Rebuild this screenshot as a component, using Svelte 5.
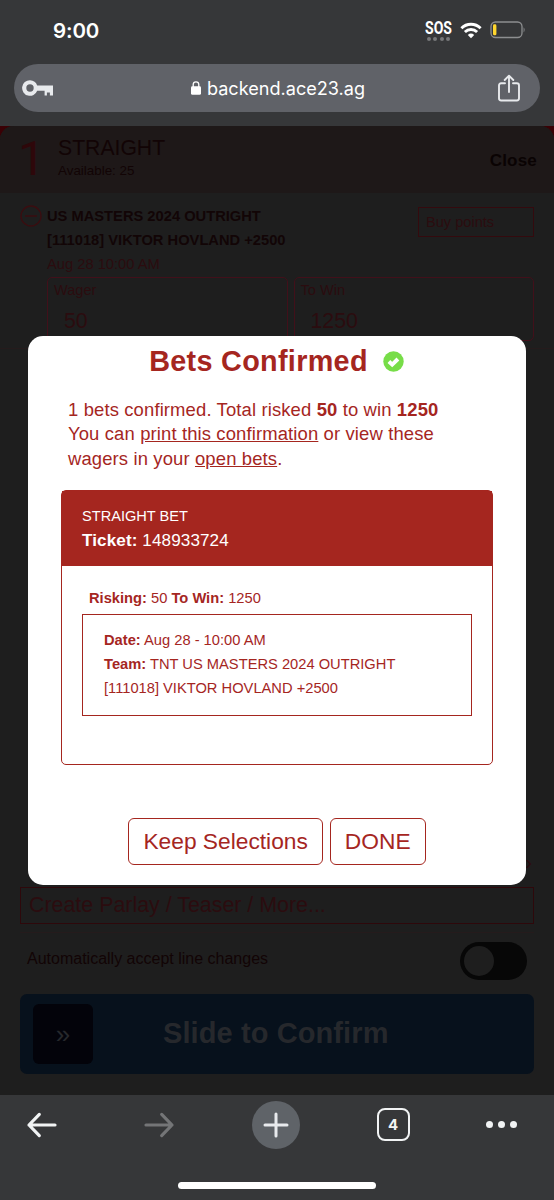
<script>
    const url = "backend.ace23.ag";
    const selection = {
        event: "US MASTERS 2024 OUTRIGHT",
        name: "[111018] VIKTOR HOVLAND +2500",
    };
    const risk = 50;
    const win = 1250;
    const ticket = "148933724";
    let autoAccept = $state(false);
</script>

<div class="phone">
    <header class="browser-top">
        <div class="status">
            <span class="time">9:00</span>
            <div class="signals">
                <div class="sos">
                    <span>SOS</span>
                    <div class="dots"><i></i><i></i><i></i><i></i></div>
                </div>
                <svg class="wifi" width="22" height="17" viewBox="0 0 22 17">
                    <g fill="none" stroke="#fff" stroke-width="2.9">
                        <path d="M1.4 6.2a13.7 13.7 0 0 1 19.2 0" />
                        <path d="M4.9 10a8.8 8.8 0 0 1 12.2 0" />
                    </g>
                    <path d="M7.8 12.9a4.7 4.7 0 0 1 6.4 0L11 16.2z" fill="#fff" />
                </svg>
                <svg width="36" height="18" viewBox="0 0 36 18">
                    <rect x="1" y="1" width="31" height="15.5" rx="4.5" fill="none" stroke="#8d8e90" stroke-width="1.3" />
                    <rect x="3" y="3.3" width="3.4" height="11" rx="1.4" fill="#ffd62e" />
                    <path d="M33.6 6.2q2 2.6 0 5.2z" fill="#8d8e90" />
                </svg>
            </div>
        </div>
        <div class="address">
            <svg width="32" height="18" viewBox="0 0 32 18">
                <path
                    fill="#e8eaed"
                    fill-rule="evenodd"
                    d="M8 1.2a7.8 7.8 0 1 0 7.2 10.6h7.4v4.6h2.3v-3h3v3h3.1V6.6H15.2A7.8 7.8 0 0 0 8 1.2zm0 4.1a3.7 3.7 0 1 1 0 7.4 3.7 3.7 0 0 1 0-7.4z"
                />
            </svg>
            <div class="url">
                <svg width="10" height="14" viewBox="0 0 10 14">
                    <rect x="0" y="5.3" width="10" height="8.5" rx="1.4" fill="#fff" />
                    <path d="M2.2 6V3.6a2.8 2.8 0 0 1 5.6 0V6" fill="none" stroke="#fff" stroke-width="1.3" />
                </svg>
                <span>{url}</span>
            </div>
            <svg width="22" height="28" viewBox="0 0 22 28" fill="none" stroke="#e8eaed" stroke-width="1.9" stroke-linecap="round" stroke-linejoin="round">
                <path d="M7 9.3H3.2Q1 9.3 1 11.5v12.8q0 2.2 2.2 2.2h15.6q2.2 0 2.2-2.2V11.5q0-2.2-2.2-2.2H15" />
                <path d="M11 18V1.8M6.7 6 11 1.7 15.3 6" />
            </svg>
        </div>
    </header>

    <main>
        <div class="slip">
            <div class="slip-head">
                <span class="count">1</span>
                <div class="kind">
                    <span class="straight">STRAIGHT</span>
                    <span class="available">Available: 25</span>
                </div>
                <button class="close">Close</button>
            </div>

            <div class="bet">
                <svg class="remove" width="22" height="22" viewBox="0 0 22 22" fill="none" stroke="#3a0d10">
                    <circle cx="11" cy="11" r="10" stroke-width="1.4" />
                    <path d="M5 11h12" stroke-width="1.3" />
                </svg>
                <div class="bet-body">
                    <div class="bet-top">
                        <div class="bet-text">
                            <b>{selection.event}</b>
                            <b>{selection.name}</b>
                            <span>Aug 28 10:00 AM</span>
                        </div>
                        <div class="points">Buy points</div>
                    </div>
                    <div class="fields">
                        <div class="field"><span>Wager</span><em>{risk}</em></div>
                        <div class="field"><span>To Win</span><em>{win}</em></div>
                    </div>
                </div>
            </div>
            <div class="rule first"></div>

            <div class="slip-foot">
                <div class="chevron">›</div>
                <div class="parlay">Create Parlay / Teaser / More...</div>
                <div class="rule"></div>
                <div class="accept">
                    <span>Automatically accept line changes</span>
                    <button
                        class="toggle"
                        class:on={autoAccept}
                        role="switch"
                        aria-checked={autoAccept}
                        aria-label="accept line changes"
                        onclick={() => (autoAccept = !autoAccept)}
                    ></button>
                </div>
                <div class="slide">
                    <div class="handle">»</div>
                    <span>Slide to Confirm</span>
                </div>
            </div>
        </div>

        <div class="modal" role="dialog">
            <h1>
                Bets Confirmed
                <svg width="21" height="21" viewBox="0 0 21 21">
                    <circle cx="10.5" cy="10.5" r="10.2" fill="#77dd48" />
                    <path d="M5.9 10.5l3.3 3.1 5.7-5.6" fill="none" stroke="#fff" stroke-width="4" />
                </svg>
            </h1>
            <p class="summary">
                1 bets confirmed. Total risked <b>{risk}</b> to win <b>{win}</b><br />
                You can <u>print this confirmation</u> or view these<br />
                wagers in your <u>open bets</u>.
            </p>
            <div class="ticket">
                <div class="ticket-head">
                    <span class="ticket-type">STRAIGHT BET</span>
                    <span class="ticket-no"><b>Ticket:</b> {ticket}</span>
                </div>
                <div class="ticket-body">
                    <div class="risking"><b>Risking:</b> {risk} <b>To Win:</b> {win}</div>
                    <div class="detail">
                        <b>Date:</b> Aug 28 - 10:00 AM<br />
                        <b>Team:</b> TNT {selection.event}<br />
                        {selection.name}
                    </div>
                </div>
            </div>
            <div class="actions">
                <button>Keep Selections</button>
                <button>DONE</button>
            </div>
        </div>
    </main>

    <footer class="browser-bottom">
        <nav>
            <div class="cell">
                <svg width="32" height="26" viewBox="0 0 32 26" fill="none" stroke="#f1f3f4" stroke-width="3.2" stroke-linecap="round" stroke-linejoin="round">
                    <path d="M29 13H3M13.3 2.4 3 13l10.3 10.6" />
                </svg>
            </div>
            <div class="cell">
                <svg width="32" height="26" viewBox="0 0 32 26" fill="none" stroke="#747577" stroke-width="3.2" stroke-linecap="round" stroke-linejoin="round">
                    <path d="M3 13h26M18.7 2.4 29 13 18.7 23.6" />
                </svg>
            </div>
            <div class="cell plus">
                <svg width="26" height="26" viewBox="0 0 26 26" stroke="#e8eaed" stroke-width="3" stroke-linecap="round">
                    <path d="M13 2v22M2 13h22" />
                </svg>
            </div>
            <div class="cell">
                <div class="tabs">4</div>
            </div>
            <div class="more"><i></i><i></i><i></i></div>
        </nav>
        <div class="home"></div>
    </footer>
</div>

<style>
    :global(body) {
        margin: 0;
        background: #1e1e1e;
    }
    .phone {
        width: 554px;
        height: 1200px;
        display: flex;
        flex-direction: column;
        overflow: hidden;
        background: #1e1e1e;
        font-family: "Liberation Sans", Arial, sans-serif;
    }
    .phone * {
        box-sizing: border-box;
    }
    button {
        font: inherit;
        background: none;
        border: none;
        padding: 0;
    }
    svg {
        display: block;
        flex: none;
    }

    .browser-top {
        height: 126px;
        flex: none;
        background: #363739;
        color: #fff;
        font-family: Inter, sans-serif;
    }
    .status {
        height: 64px;
        padding: 0 28px 4px 53px;
        display: flex;
        align-items: center;
        justify-content: space-between;
    }
    .time {
        font-size: 20.5px;
        font-weight: 600;
        letter-spacing: -0.1px;
    }
    .signals {
        display: flex;
        align-items: center;
        gap: 8px;
    }
    .sos {
        width: 27px;
        font: 700 18px/17px Roboto, sans-serif;
    }
    .sos span {
        display: block;
        transform: scaleX(0.78);
        transform-origin: left;
    }
    .dots {
        display: flex;
        gap: 2.3px;
        padding: 1px 0 0 2px;
    }
    .dots i {
        width: 4px;
        height: 4px;
        border-radius: 50%;
        background: #77787a;
    }
    .address {
        height: 48px;
        margin: 0 14px;
        padding: 0 20px 0 8px;
        border-radius: 24px;
        background: #606268;
        display: flex;
        align-items: center;
        justify-content: space-between;
    }
    .url {
        display: flex;
        align-items: center;
        gap: 6px;
        padding: 0 0 1px 4px;
        font-size: 18.1px;
    }

    main {
        position: relative;
        flex: 1;
        background: #3a0005;
    }
    .slip {
        height: 100%;
        display: flex;
        flex-direction: column;
        border-radius: 14px 14px 0 0;
        overflow: hidden;
        background: #1e1e1e;
        color: #2b0c0f;
        font-size: 14.6px;
    }
    .slip-head {
        height: 67px;
        padding: 0 17px 0 18px;
        display: flex;
        background: #1e1818;
        color: #120405;
    }
    .count {
        width: 40px;
        font: 48px/66px Roboto, sans-serif;
        color: #2e070a;
    }
    .kind {
        flex: 1;
        display: flex;
        flex-direction: column;
        padding-top: 9px;
    }
    .straight {
        font-size: 21.2px;
        line-height: 26px;
    }
    .available {
        font-size: 13.4px;
        line-height: 20px;
    }
    .close {
        padding-top: 2px;
        font-size: 17px;
        font-weight: bold;
        letter-spacing: 0.2px;
        color: #0a0303;
    }
    .bet {
        display: flex;
        padding: 11px 20px 0;
        gap: 5px;
    }
    .remove {
        margin-top: 1px;
    }
    .bet-body {
        flex: 1;
    }
    .bet-top {
        display: flex;
        justify-content: space-between;
    }
    .bet-text {
        display: flex;
        flex-direction: column;
        font-size: 14.7px;
        line-height: 24px;
    }
    .bet-text b {
        color: #120506;
    }
    .points {
        width: 116px;
        height: 30px;
        margin-top: 3px;
        padding-left: 7px;
        border: 1px solid #340a0e;
        line-height: 28px;
    }
    .fields {
        display: flex;
        gap: 6px;
        padding-top: 1px;
    }
    .field {
        flex: 1;
        height: 64px;
        padding: 3px 6px;
        border: 1px solid #42101a;
        border-radius: 5px;
        display: flex;
        flex-direction: column;
    }
    .field span {
        line-height: 18px;
    }
    .field em {
        padding: 10px 10px 0;
        font-size: 21.3px;
        font-style: normal;
        line-height: 25px;
    }
    .rule {
        height: 1px;
        margin: 0 20px;
        background: #251b1c;
    }
    .first {
        margin: 7px 0 0;
    }
    .slip-foot {
        margin-top: auto;
        padding-bottom: 21px;
    }
    .chevron {
        margin-right: 22px;
        text-align: right;
        font-size: 20px;
        line-height: 24px;
        padding-bottom: 13px;
    }
    .parlay {
        height: 37px;
        margin: 0 20px 8px;
        padding-left: 8px;
        border: 1px solid #2e080b;
        font-size: 21.4px;
        line-height: 35px;
    }
    .accept {
        height: 61px;
        padding: 0 27px 5px;
        display: flex;
        align-items: center;
        justify-content: space-between;
        color: #120405;
        font-size: 16px;
    }
    .accept span {
        padding-bottom: 5px;
    }
    .toggle {
        width: 67px;
        height: 38px;
        padding: 4px;
        border-radius: 19px;
        background: #070707;
    }
    .toggle::before {
        content: "";
        display: block;
        width: 30px;
        height: 30px;
        border-radius: 50%;
        background: #1e1e1e;
    }
    .toggle.on::before {
        margin-left: auto;
    }
    .slide {
        height: 80px;
        margin: 0 20px;
        padding: 0 13px;
        border-radius: 7px;
        background: #07111c;
        display: flex;
        align-items: center;
        color: #26282c;
        font-size: 29px;
        font-weight: bold;
    }
    .slide span {
        padding: 0 0 1px 70px;
        letter-spacing: 0.1px;
    }
    .handle {
        width: 60px;
        height: 60px;
        border-radius: 6px;
        background: #03030a;
        text-align: center;
        font-size: 26px;
        font-weight: normal;
        line-height: 60px;
    }

    .modal {
        position: absolute;
        left: 28px;
        top: 210px;
        width: 498px;
        height: 549px;
        padding: 0 33px;
        border-radius: 15px;
        background: #fff;
        color: #a5261f;
    }
    h1 {
        margin: 0;
        padding: 8px 1px 0 0;
        display: flex;
        align-items: center;
        justify-content: center;
        gap: 15px;
        font-size: 28.8px;
        line-height: 34px;
        letter-spacing: 0.3px;
    }
    .summary {
        margin: 20px 0 0;
        padding-left: 7px;
        font-size: 18.45px;
        line-height: 24.3px;
        letter-spacing: 0.13px;
        white-space: nowrap;
    }
    .ticket {
        height: 275px;
        margin-top: 19px;
        border: 1px solid #a5261f;
        border-radius: 5px;
    }
    .ticket-head {
        height: 75px;
        padding: 13px 20px 0;
        display: flex;
        flex-direction: column;
        background: #a5261f;
        color: #fff;
        line-height: 24px;
    }
    .ticket-type {
        font-size: 14.6px;
    }
    .ticket-no {
        padding-top: 1px;
        font-size: 17.1px;
        letter-spacing: 0.1px;
    }
    .ticket-body {
        padding: 20px 20px 0;
        font-size: 14.7px;
        line-height: 24px;
    }
    .risking {
        padding: 0 7px 4px;
    }
    .detail {
        height: 102px;
        padding: 13px 21px 0 21px;
        border: 1px solid #a5261f;
        white-space: nowrap;
    }
    .actions {
        display: flex;
        justify-content: center;
        gap: 7px;
        padding-top: 53px;
    }
    .actions button {
        height: 47px;
        padding: 0 14px;
        border: 1px solid #a5261f;
        border-radius: 6px;
        color: inherit;
        font-size: 22.75px;
    }

    .browser-bottom {
        height: 105px;
        flex: none;
        background: #363739;
        font-family: Inter, sans-serif;
    }
    nav {
        height: 87px;
        padding: 0 0 28px 18px;
        display: flex;
        align-items: center;
        gap: 69px;
    }
    .cell {
        width: 48px;
        height: 48px;
        display: grid;
        place-items: center;
    }
    .plus {
        border-radius: 50%;
        background: #5f6368;
    }
    .tabs {
        width: 33px;
        height: 33px;
        border: 2.5px solid #f1f3f4;
        border-radius: 8px;
        text-align: center;
        font-size: 15px;
        font-weight: 700;
        line-height: 29px;
        color: #f1f3f4;
    }
    .more {
        display: flex;
        gap: 5px;
    }
    .more i {
        width: 7px;
        height: 7px;
        border-radius: 50%;
        background: #f1f3f4;
    }
    .home {
        width: 198px;
        height: 7px;
        margin: 0 auto;
        border-radius: 4px;
        background: #fff;
    }
</style>
